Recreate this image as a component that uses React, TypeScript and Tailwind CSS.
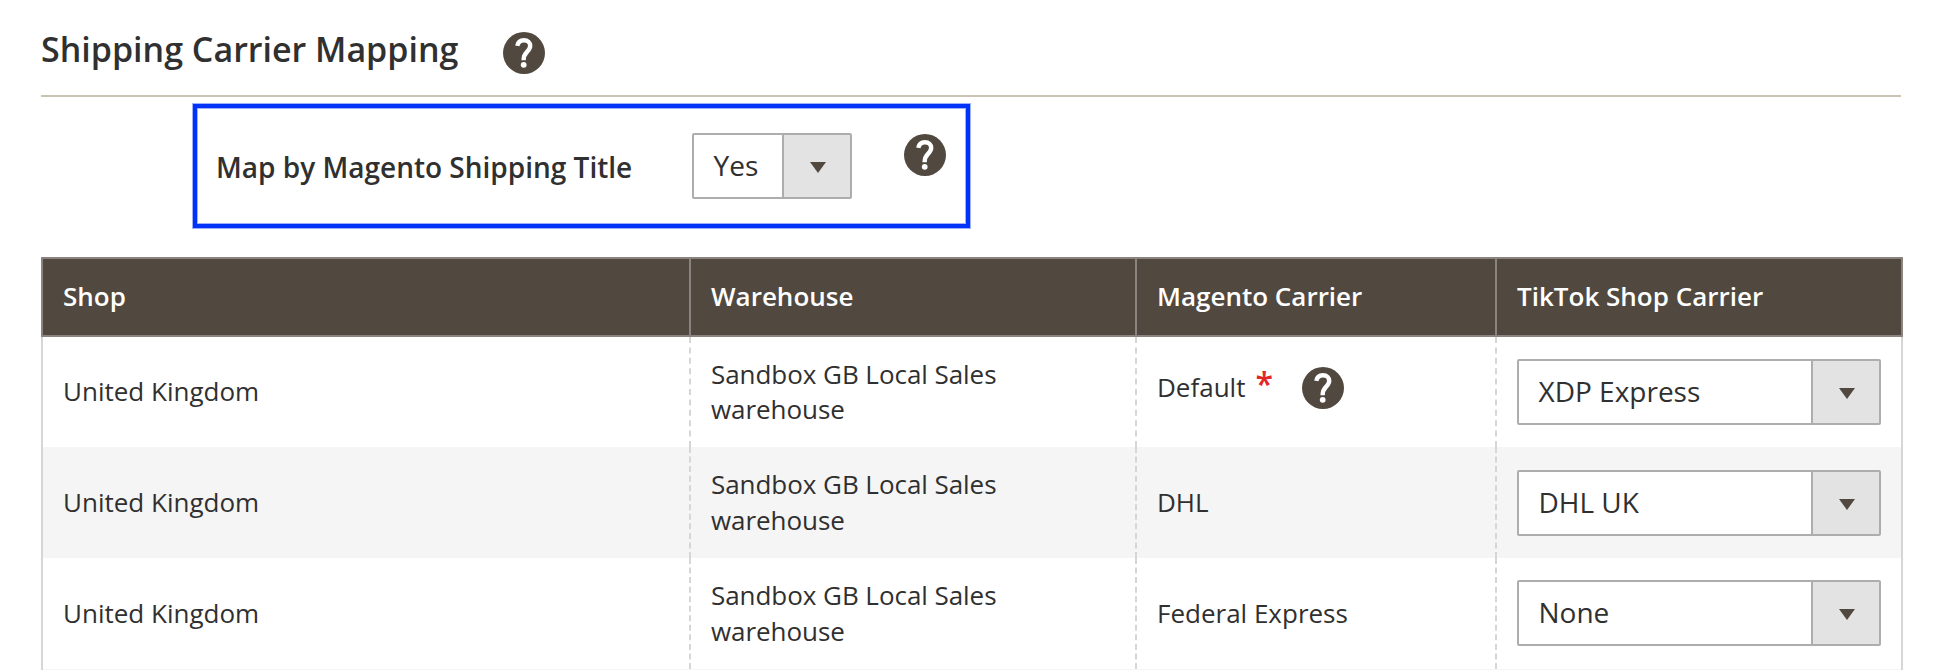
import clsx from "clsx";

type Mapping = {
  shop: string;
  warehouse: string;
  magentoCarrier: string;
  tiktokCarrier: string;
  isDefault?: boolean;
};

const columns = ["Shop", "Warehouse", "Magento Carrier", "TikTok Shop Carrier"];

const mappings: Mapping[] = [
  {
    shop: "United Kingdom",
    warehouse: "Sandbox GB Local Sales warehouse",
    magentoCarrier: "Default",
    tiktokCarrier: "XDP Express",
    isDefault: true,
  },
  {
    shop: "United Kingdom",
    warehouse: "Sandbox GB Local Sales warehouse",
    magentoCarrier: "DHL",
    tiktokCarrier: "DHL UK",
  },
  {
    shop: "United Kingdom",
    warehouse: "Sandbox GB Local Sales warehouse",
    magentoCarrier: "Federal Express",
    tiktokCarrier: "None",
  },
];

function HelpIcon({ className }: { className?: string }) {
  return (
    <svg viewBox="0 0 42 42" className={clsx("h-[42px] w-[42px] shrink-0", className)} role="img" aria-label="Help">
      <circle cx="21" cy="21" r="21" fill="#51493f" />
      <path
        d="M14.3 13.9C14.9 10.3 17.3 8.2 20.9 8.2c3.9 0 6.3 2.3 6.3 5.6 0 2.6-1.3 4.2-3.2 6-2.2 2.1-3.4 3.7-3.4 8.5"
        fill="none"
        stroke="#fff"
        strokeWidth="4.4"
      />
      <circle cx="20.7" cy="32.8" r="2.9" fill="#fff" />
    </svg>
  );
}

function SelectBox({ value, className }: { value: string; className?: string }) {
  return (
    <button
      type="button"
      className={clsx(
        "flex h-[66px] shrink-0 items-stretch rounded-[2px] border-2 border-[#adadad] bg-white text-left text-[28px] text-[#303030]",
        className,
      )}
    >
      <span className="flex-1 pt-[11px] pl-[19.5px] leading-[38px]">{value}</span>
      <span className="flex w-[68px] items-center justify-center border-l-2 border-[#adadad] bg-[#e3e3e3]">
        <svg viewBox="0 0 16 11" className="mt-[3px] ml-px h-[11px] w-4" aria-hidden="true">
          <path d="M0 0h16L8 11z" fill="#51493f" />
        </svg>
      </span>
    </button>
  );
}

export default function App() {
  return (
    <main className="h-[670px] w-[1940px] overflow-hidden bg-white pl-[41px] font-['Open_Sans',sans-serif] text-[#303030]">
      <header className="flex h-[97px] w-[1860px] items-start border-b-2 border-[#c9c4b4]">
        <h1 className="w-[462px] pt-[25px] text-[34px] leading-[48px] font-semibold">Shipping Carrier Mapping</h1>
        <HelpIcon className="mt-8" />
      </header>

      <section className="mt-[7px] ml-[152px] flex h-[124px] w-[777px] items-start border-4 border-[#0032fa] shadow-[0_0_0_1px_#9db1fd,inset_0_0_0_1px_#9db1fd]">
        <span className="w-[495px] pt-[39px] pl-[19px] text-[28px] leading-[40px] font-semibold">
          Map by Magento Shipping Title
        </span>
        <SelectBox value="Yes" className="mt-[25px] w-40" />
        <HelpIcon className="mt-[26px] ml-[52px]" />
      </section>

      <div className="mt-[29px] w-[1862px] text-[26px] leading-[35.4px]">
        <div className="grid h-20 grid-cols-[646px_446px_360px_406px] border-2 border-[#8a837f] bg-[#51493f] font-semibold text-white">
          {columns.map((name, i) => (
            <div key={name} className={clsx("flex items-center pl-5", i > 0 && "border-l-2 border-[#8a837f]")}>
              {name}
            </div>
          ))}
        </div>
        {mappings.map((row, i) => (
          <div
            key={row.magentoCarrier}
            className={clsx(
              "grid grid-cols-[646px_446px_360px_406px] border-x-2 border-[#d6d6d6]",
              i === 0 ? "h-[110px]" : "h-[111px]",
              i % 2 === 1 && "bg-[#f5f5f5]",
            )}
          >
            <div className="flex items-center pl-5">{row.shop}</div>
            <div className="flex items-center border-l-2 border-dashed border-[#d6d6d6] pr-20 pl-5 tracking-[-0.05px]">
              {row.warehouse}
            </div>
            <div
              className={clsx(
                "flex items-center border-l-2 border-dashed border-[#d6d6d6] pl-5",
                row.isDefault && "pb-2",
              )}
            >
              {row.magentoCarrier}
              {row.isDefault && (
                <>
                  <span className="mb-2 ml-[10px] text-[32px] font-semibold text-[#e22626]">*</span>
                  <HelpIcon className="ml-[29px]" />
                </>
              )}
            </div>
            <div
              className={clsx(
                "flex items-start border-l-2 border-dashed border-[#d6d6d6] pl-5",
                i % 2 === 1 ? "pt-[23px]" : "pt-[22px]",
              )}
            >
              <SelectBox value={row.tiktokCarrier} className="w-[364px]" />
            </div>
          </div>
        ))}
        <div className="h-px border-x-2 border-[#d6d6d6] bg-[#f5f5f5]" />
      </div>
    </main>
  );
}
